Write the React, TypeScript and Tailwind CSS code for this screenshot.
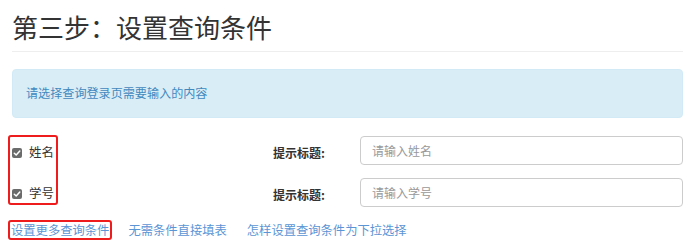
import React from 'react';

const font = { fontFamily: '"Noto Sans CJK SC", "Noto Sans", sans-serif' };

function CheckMark() {
  return (
    <span className="w-[10px] h-[10px] rounded-[2px] bg-[#6b6b6b] flex items-center justify-center shrink-0">
      <svg width="8" height="8" viewBox="0 0 8 8">
        <path d="M1.3 4.2 L3.2 6 L6.8 2" stroke="#fff" strokeWidth="1.5" fill="none" strokeLinecap="round" strokeLinejoin="round" />
      </svg>
    </span>
  );
}

export default function App() {
  const fields = [
    { name: '姓名', placeholder: '请输入姓名' },
    { name: '学号', placeholder: '请输入学号' }
  ];

  return (
    <div className="w-[692px] h-[244px] bg-white pl-[12px] pr-[9px] overflow-hidden" style={font}>
      {/* Title */}
      <h1 className="mt-[9px] pb-[6px] text-[26px] leading-[36px] text-[#333] border-b border-[#eeeeee] font-normal">
        第三步：设置查询条件
      </h1>

      {/* Info */}
      <div className="mt-[17px] h-[49px] rounded-[4px] bg-[#d9edf7] border border-[#d2eaf5] flex items-center px-[13px] text-[12.1px] text-[#4389bd]">
        请选择查询登录页需要输入的内容
      </div>

      {/* Fields */}
      <div className="mt-[17px] flex items-start">
        <div className="w-[261px]">
          <div className="-ml-[4px] w-[50px] h-[70px] border-2 border-[#ee1c1c] rounded-[3px] pl-[2px] pt-[6px] flex flex-col gap-[22px]">
            {fields.map((f) => (
              <label key={f.name} className="h-[20px] flex items-center gap-[7px] text-[12.5px] text-[#333]">
                <CheckMark />
                <span>{f.name}</span>
              </label>
            ))}
          </div>
        </div>
        <div className="flex-1 flex flex-col gap-[13px] pt-[1px]">
          {fields.map((f) => (
            <div key={f.name} className="flex items-center h-[29px]">
              <div className="w-[87px] pt-[4px] text-[12px] font-bold text-[#333]">提示标题:</div>
              <input
                className="flex-1 h-[29px] border border-[#cccccc] rounded-[4px] px-[11px] text-[12px] text-[#333] placeholder:text-[#999] outline-none"
                placeholder={f.placeholder}
                style={font}
              />
            </div>
          ))}
        </div>
      </div>

      {/* Links */}
      <div className="mt-[13px] flex items-center text-[12.3px] text-[#5b95d5]">
        <a className="-ml-[4px] h-[20px] border-2 border-[#ee1c1c] rounded-[3px] px-[1px] flex items-center">设置更多查询条件</a>
        <a className="ml-[16px]">无需条件直接填表</a>
        <a className="ml-[20px]">怎样设置查询条件为下拉选择</a>
      </div>
    </div>
  );
}
